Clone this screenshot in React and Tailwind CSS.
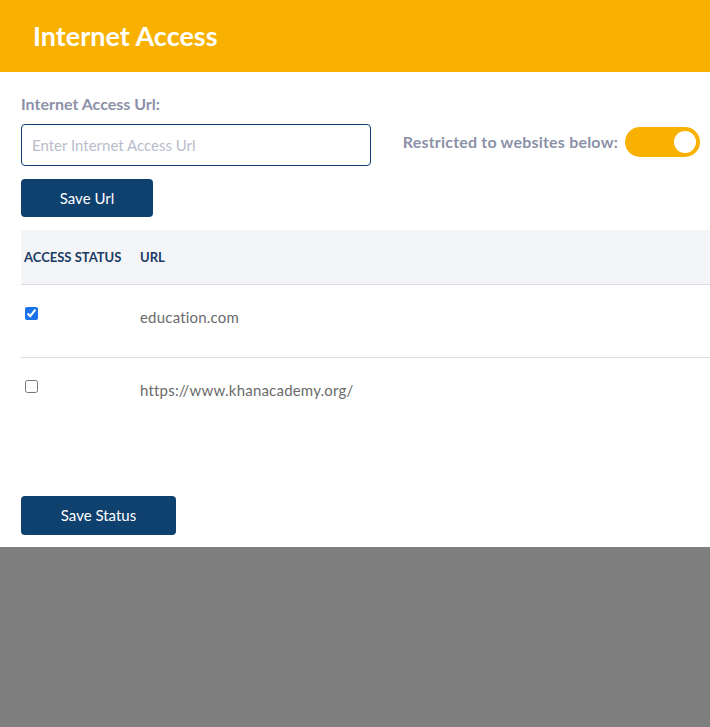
import React, { useState } from 'react';

const sites = [
  { id: 1, url: 'education.com', allowed: true },
  { id: 2, url: 'https://www.khanacademy.org/', allowed: false },
];

export default function App() {
  const [rows, setRows] = useState(sites);
  const [restricted, setRestricted] = useState(true);

  const toggleRow = (id) =>
    setRows(rows.map(r => (r.id === id ? { ...r, allowed: !r.allowed } : r)));

  return (
    <div className="min-h-[727px] w-[710px] bg-[#7f7f7f] overflow-hidden font-['Source_Sans_Pro','Lato',sans-serif]">
      <div className="bg-white pb-3">
        {/* Header */}
        <div className="h-[72px] bg-[#f8b100] flex items-center pl-[33px]">
          <h1 className="text-[27px] font-bold text-white">Internet Access</h1>
        </div>

        <div className="pl-[21px] pt-[22px]">
          <div className="text-[16px] font-bold text-[#8c91a8] leading-5">Internet Access Url:</div>

          <div className="flex items-center mt-[10px]">
            <input
              type="text"
              placeholder="Enter Internet Access Url"
              className="w-[350px] h-[42px] border border-[#0f4070] rounded-[4px] px-[10px] text-[15px] text-gray-700 placeholder:text-[#b9bccb] outline-none"
            />
            <div className="flex items-center ml-auto pr-[10px] gap-[7px] -mt-[6px]">
              <span className="text-[16px] font-bold text-[#8c91a8] tracking-[0.2px]">Restricted to websites below:</span>
              <button
                onClick={() => setRestricted(!restricted)}
                className={`w-[75px] h-[30px] rounded-full flex items-center px-[4px] ${restricted ? 'bg-[#f8b100] justify-end' : 'bg-gray-300 justify-start'}`}
              >
                <span className="w-[22px] h-[22px] rounded-full bg-white block" />
              </button>
            </div>
          </div>

          <button className="mt-[13px] w-[132px] h-[38px] rounded-[4px] bg-[#0f416f] text-white text-[15px] font-['Lato',sans-serif]">
            Save Url
          </button>

          {/* Table */}
          <table className="mt-[13px] w-[689px] border-collapse text-left">
            <thead>
              <tr className="bg-[#f4f5f9] h-[54px] border-b border-[#dcdcdc]">
                <th className="pl-[3px] w-[119px] text-[13px] font-bold text-[#1b3b63] uppercase pt-[1px]">Access Status</th>
                <th className="text-[13px] font-bold text-[#1b3b63] uppercase pt-[1px]">Url</th>
              </tr>
            </thead>
            <tbody>
              {rows.map(r => (
                <tr key={r.id} className="h-[73px] border-b border-[#dcdcdc] last:border-b-0 align-top">
                  <td className="pl-[4px] pt-[22px]">
                    <input
                      type="checkbox"
                      checked={r.allowed}
                      onChange={() => toggleRow(r.id)}
                      className="w-[13px] h-[13px] block accent-[#1a73e8]"
                    />
                  </td>
                  <td className="pt-[21px] text-[15px] text-[#6b6b6b] tracking-[0.2px]">{r.url}</td>
                </tr>
              ))}
            </tbody>
          </table>

          <button className="mt-[66px] w-[155px] h-[39px] rounded-[4px] bg-[#0f416f] text-white text-[15px] font-['Lato',sans-serif]">
            Save Status
          </button>
        </div>
      </div>
    </div>
  );
}
